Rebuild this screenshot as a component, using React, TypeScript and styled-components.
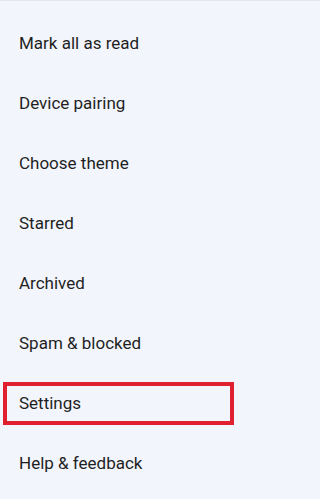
import styled, { createGlobalStyle } from 'styled-components';

const GlobalStyle = createGlobalStyle`
  html, body {
    margin: 0;
    padding: 0;
    background: #f2f5fc;
  }
`

const Menu = styled.ul`
  list-style: none;
  margin: 0;
  padding: 12px 0 0;
  width: 100%;
  min-height: 499px;
  box-sizing: border-box;
  background: #f2f5fc;
  border-top: 1px solid #e3e6ee;
  font-family: Roboto, "Noto Sans", sans-serif;
`

const MenuItem = styled.li<{ $marked?: boolean }>`
  position: relative;
  height: 60px;
  display: flex;
  align-items: center;
  padding-left: 19px;
  font-size: 17px;
  color: #1f1f1f;

  ${({ $marked }) => $marked && `
    &::after {
      content: '';
      position: absolute;
      left: 3px;
      top: 9px;
      width: 231px;
      height: 43px;
      box-sizing: border-box;
      border: 4px solid #e0202e;
    }
  `}
`

const items = [
  'Mark all as read',
  'Device pairing',
  'Choose theme',
  'Starred',
  'Archived',
  'Spam & blocked',
  'Settings',
  'Help & feedback',
];

// Меню с выделенным пунктом настроек
const App = () => {
  return (
    <>
      <GlobalStyle />
      <Menu>
        {items.map((item) => (
          <MenuItem key={item} $marked={item === 'Settings'}>{item}</MenuItem>
        ))}
      </Menu>
    </>
  );
}

export default App;
